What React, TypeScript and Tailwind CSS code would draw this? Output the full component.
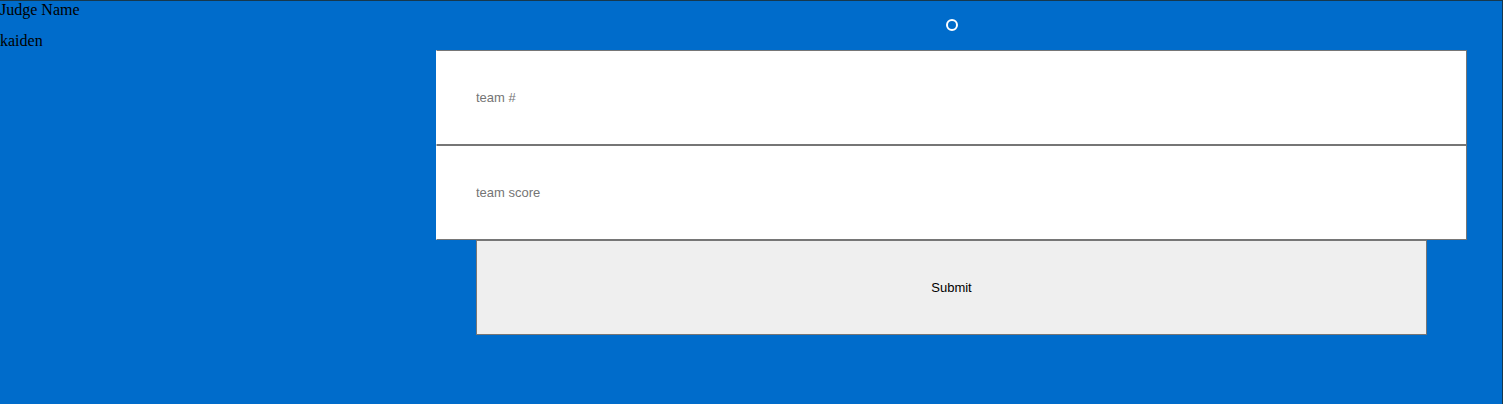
import React from "react";

export default function App() {
  return (
    <div className="flex h-[404px] w-[1503px] border-t border-r border-[#17384d] bg-[#006ccb]">
      <div className="w-[436px] shrink-0 font-['Liberation_Serif',serif] text-[16px] leading-[18px] text-black">
        <div>Judge Name</div>
        <div className="mt-[13px]">kaiden</div>
      </div>
      <form className="flex w-[1031px] shrink-0 flex-col items-center font-['Liberation_Sans',Arial,sans-serif] text-[13px]">
        <div className="mt-[18px] mb-[19px] h-[12px] w-[12px] rounded-full border-2 border-white" />
        <input
          type="text"
          placeholder="team #"
          className="h-[95px] w-full border border-[#767676] border-l-white bg-white pl-[39px] text-black outline-none placeholder:text-[#757575]"
        />
        <input
          type="text"
          placeholder="team score"
          className="h-[95px] w-full border border-[#767676] border-l-white bg-white pl-[39px] text-black outline-none placeholder:text-[#757575]"
        />
        <button
          type="button"
          className="h-[95px] w-[951px] border border-[#767676] bg-[#efefef] text-black"
        >
          Submit
        </button>
      </form>
    </div>
  );
}
